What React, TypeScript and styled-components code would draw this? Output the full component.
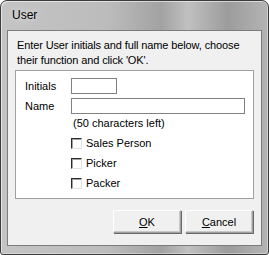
import React from "react";
import styled, { createGlobalStyle } from "styled-components";

const Global = createGlobalStyle`
  html, body { margin: 0; padding: 0; background: #ffffff; }
  body { font-family: "Liberation Sans", Arial, sans-serif; }
  * { box-sizing: border-box; }
`;

const Window = styled.div`
  width: 269px;
  height: 255px;
  border: 1px solid #3c3c3c;
  border-radius: 7px 7px 3px 3px;
  background: linear-gradient(90deg, #c4c4c4 0%, #bcbcbc 40%, #a2a2a2 60%, #c0c0c0 70%, #9c9c9c 85%, #b4b4b4 100%);
  box-shadow: inset 1px 1px 0 rgba(255,255,255,0.55), inset -1px -1px 0 rgba(255,255,255,0.35);
  padding: 0 6px 8px 6px;
  display: flex;
  flex-direction: column;
`;

const TitleBar = styled.div`
  height: 29px;
  display: flex;
  align-items: center;
  padding-left: 5px;
  padding-bottom: 1px;
`;

const Title = styled.span`
  font-family: "Liberation Sans", Arial, sans-serif;
  font-size: 12px;
  color: #000;
  text-shadow: 0 0 6px rgba(255,255,255,0.9);
`;

const Client = styled.div`
  flex: 1;
  border: 1px solid #7c7c7c;
  background: #f0f0f0;
  display: flex;
  flex-direction: column;
  padding: 7px 7px 0 7px;
`;

const Intro = styled.p`
  margin: 0 0 0 2px;
  font-size: 11px;
  line-height: 15px;
  letter-spacing: -0.12px;
  color: #000;
`;

const Panel = styled.div`
  margin-top: 2px;
  background: #ffffff;
  border: 1px solid #a0a0a0;
  height: 129px;
  padding: 7px 7px 0 9px;
  display: flex;
  flex-direction: column;
`;

const FieldRow = styled.div<{ $gap?: number }>`
  display: flex;
  align-items: center;
  height: 16px;
  margin-bottom: ${(p) => p.$gap ?? 4}px;
`;

const Label = styled.span`
  width: 46px;
  font-size: 11px;
  line-height: 13px;
  color: #000;
`;

const TextBox = styled.div<{ $width: number }>`
  width: ${(p) => p.$width}px;
  height: 16px;
  border: 1px solid #828282;
  background: #fff;
`;

const Hint = styled.div`
  margin-left: 48px;
  font-size: 11px;
  line-height: 13px;
  color: #000;
  margin-bottom: 8px;
`;

const CheckRow = styled.label`
  display: flex;
  align-items: center;
  margin-left: 46px;
  height: 11px;
  line-height: 11px;
  margin-bottom: 9px;
  font-size: 11px;
  color: #000;
`;

const Box = styled.span`
  width: 11px;
  height: 11px;
  border-top: 1px solid #2a2a2a;
  border-left: 1px solid #2a2a2a;
  border-right: 1px solid #e3e3e3;
  border-bottom: 1px solid #e3e3e3;
  box-shadow: inset 1px 1px 0 #a0a0a0;
  background: #fff;
  margin-right: 4px;
  flex: none;
`;

const ButtonRow = styled.div`
  display: flex;
  justify-content: flex-end;
  gap: 4px;
  margin-top: 11px;
  padding-right: 1px;
`;

const Button = styled.button`
  width: 68px;
  height: 23px;
  padding: 0;
  background: #f0f0f0;
  border-top: 1px solid #ffffff;
  border-left: 1px solid #ffffff;
  border-right: 1px solid #a0a0a0;
  border-bottom: 1px solid #a0a0a0;
  box-shadow: 1px 1px 0 #696969, inset -1px -1px 0 #c8c8c8;
  font-family: "Liberation Sans", Arial, sans-serif;
  font-size: 11px;
  color: #000;
  u { text-decoration: underline; text-underline-offset: 1px; }
`;

export default function App() {
  return (
    <>
      <Global />
      <Window>
        <TitleBar>
          <Title>User</Title>
        </TitleBar>
        <Client>
          <Intro>
            Enter User initials and full name below, choose
            <br />
            their function and click 'OK'.
          </Intro>
          <Panel>
            <FieldRow>
              <Label>Initials</Label>
              <TextBox $width={46} />
            </FieldRow>
            <FieldRow $gap={3}>
              <Label>Name</Label>
              <TextBox $width={174} />
            </FieldRow>
            <Hint>(50 characters left)</Hint>
            <CheckRow>
              <Box />
              Sales Person
            </CheckRow>
            <CheckRow>
              <Box />
              Picker
            </CheckRow>
            <CheckRow>
              <Box />
              Packer
            </CheckRow>
          </Panel>
          <ButtonRow>
            <Button>
              <u>O</u>K
            </Button>
            <Button>
              <u>C</u>ancel
            </Button>
          </ButtonRow>
        </Client>
      </Window>
    </>
  );
}
